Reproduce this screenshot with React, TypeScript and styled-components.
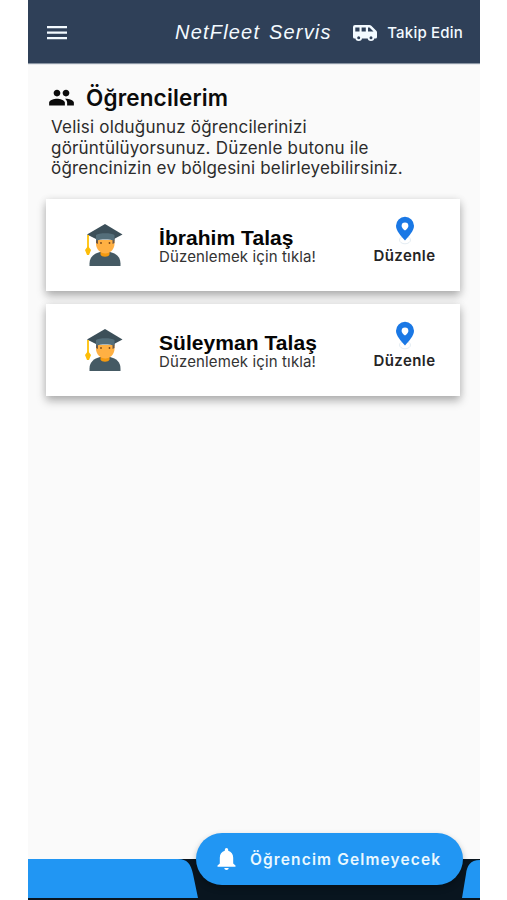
import React from "react";
import styled, { createGlobalStyle } from "styled-components";

const GlobalStyle = createGlobalStyle`
  * { box-sizing: border-box; }
  body { margin: 0; background: #fff; font-family: Inter, "Liberation Sans", sans-serif; }
  svg { display: block; flex: none; }
  button { font-family: inherit; border: 0; background: none; padding: 0; cursor: pointer; }
`;

const Screen = styled.div`
  position: relative;
  display: flex;
  flex-direction: column;
  width: 452px;
  height: 900px;
  margin-left: 28px;
  background: #fafafa;
  overflow: hidden;
`;

const AppBar = styled.header`
  display: flex;
  align-items: center;
  flex: none;
  height: 63px;
  padding: 2px 17px 0 17px;
  color: #f3faff;
  background: #2f4058;
  box-shadow: 0 1px 1px #8a95a3;
`;

const Brand = styled.div`
  width: 160px;
  margin-left: 106px;
  font: italic 300 20px "Liberation Sans", sans-serif;
  letter-spacing: 1.2px;
  word-spacing: 2px;
  white-space: nowrap;
`;

const TrackButton = styled.button`
  display: flex;
  align-items: center;
  gap: 9px;
  margin-left: auto;
  color: inherit;
  font-size: 15px;
  font-weight: 500;
  letter-spacing: 0.2px;
  white-space: nowrap;
`;

const Main = styled.main`
  flex: 1;
  padding: 21px 20px 0 18px;
`;

const Heading = styled.h1`
  display: flex;
  align-items: center;
  gap: 11px;
  height: 27px;
  margin: 0;
  padding-left: 2px;
  color: #0b0b0b;
  font-size: 22.5px;
  font-weight: 600;
  letter-spacing: 0.15px;
`;

const Intro = styled.p`
  margin: 6px 0 20px;
  padding-left: 5px;
  color: #2c2c2c;
  font-size: 17px;
  line-height: 20.7px;
  letter-spacing: 0.2px;
  white-space: nowrap;
`;

const Cards = styled.div`
  display: grid;
  gap: 13px;
`;

const Card = styled.article`
  display: grid;
  grid-template-columns: 113px 1fr 111px;
  height: 92px;
  background: #fff;
  box-shadow: 0 5px 9px rgba(0, 0, 0, 0.27), 0 1px 8px rgba(0, 0, 0, 0.1);
`;

const Avatar = styled.div`
  padding: 24px 0 0 39px;
`;

const Student = styled.div`
  padding-top: 26px;
  white-space: nowrap;
`;

const Name = styled.h2`
  margin: 0;
  color: #050505;
  font: bold 21px/25px "Liberation Sans", sans-serif;
  letter-spacing: 0.05px;
`;

const Hint = styled.p`
  margin: 0;
  color: #333;
  font-size: 15px;
  line-height: 14px;
  letter-spacing: 0.13px;
`;

const EditButton = styled.button`
  display: flex;
  flex-direction: column;
  align-items: center;
  padding-top: 17px;
  color: #252525;
  font-size: 15px;
  line-height: 20px;
  font-weight: 600;
  letter-spacing: 0.4px;
`;

const BottomBar = styled.footer`
  display: flex;
  flex: none;
  justify-content: space-between;
  height: 41px;
  background: #09151f;
`;

const Fab = styled.button`
  position: absolute;
  right: 17px;
  bottom: 15px;
  display: flex;
  align-items: center;
  gap: 14px;
  width: 267px;
  height: 52px;
  padding-left: 21px;
  border-radius: 26px;
  color: #e9f8ff;
  background: #2196f3;
  box-shadow: 0 3px 6px rgba(0, 0, 0, 0.28);
  font-size: 15.5px;
  font-weight: 600;
  letter-spacing: 1.13px;
  white-space: nowrap;
`;

const MenuIcon = () => (
  <svg width="24" height="24" viewBox="0 0 24 24" fill="currentColor">
    <path d="M2 5h20v2.2H2zm0 5.6h20v2.2H2zm0 5.5h20v2.2H2z" />
  </svg>
);

const VanIcon = () => (
  <svg width="26" height="18" viewBox="0 0 26 18">
    <path d="M3 1h14.500q1 0 1.800.8l5 5q.7.700.700 1.700V13q0 1.500-1.500 1.500H2.500Q1 14.500 1 13V3q0-2 2-2z" fill="currentColor" />
    <path d="M3.300 3.500h4.200v4H3.300zM9.600 3.500h4.200v4H9.600zM16 3.500h1.500l4 4H16z" fill="#2f4058" />
    <circle cx="6.700" cy="13.800" r="2.400" fill="#2f4058" stroke="currentColor" strokeWidth="1.800" />
    <circle cx="19" cy="13.800" r="2.400" fill="#2f4058" stroke="currentColor" strokeWidth="1.800" />
  </svg>
);

const PeopleIcon = () => (
  <svg width="27" height="27" viewBox="0 0 24 24" fill="currentColor">
    <path d="M16 11c1.660 0 2.990-1.340 2.990-3S17.660 5 16 5s-3 1.340-3 3 1.340 3 3 3zm-8 0c1.660 0 2.990-1.340 2.990-3S9.660 5 8 5 5 6.340 5 8s1.340 3 3 3zm0 2c-2.330 0-7 1.170-7 3.500V19h14v-2.500c0-2.330-4.670-3.500-7-3.500zm8 0c-.29 0-.62.020-.97.050 1.160.84 1.970 1.970 1.970 3.450V19h6v-2.500c0-2.330-4.670-3.500-7-3.500z" />
  </svg>
);

const GraduateIcon = () => (
  <svg width="38" height="44" viewBox="0 0 38 44">
    <path d="M4.500 43v-2.500C4.500 34 9 30.500 15 29h10c6.500 1.500 10.500 5 10.500 11.500V43z" fill="#455a64" />
    <path d="M15.500 27h9v4.500c-1 3-8 3-9 0z" fill="#f59a10" />
    <path d="M11 17h18.500v4c0 5-4.300 9.500-9.200 9.500S11 26 11 21z" fill="#ffb043" />
    <path d="M11 15h2v6l-2-1zM27.500 15h2v5l-2 1z" fill="#6d5848" />
    <path d="M20 1L37.500 11.500 29 16H11L2 11.500z" fill="#3c4f59" />
    <path d="M11 12c3-2.500 15.500-2.500 18.500 0v5.500c-4-1.500-14.500-1.500-18.500 0z" fill="#546e7a" />
    <circle cx="16" cy="20" r="0.900" fill="#784719" />
    <circle cx="24.500" cy="20" r="0.900" fill="#784719" />
    <path d="M3 12v14" stroke="#ffc107" strokeWidth="1.8" />
    <path d="M3 23l3 4-2 5H2l-2-5z" fill="#fdbd08" />
  </svg>
);

const PinIcon = () => (
  <svg width="20" height="30" viewBox="0 0 20 30">
    <ellipse cx="10" cy="24" rx="5.500" ry="3.800" fill="#fff" stroke="#dde7ef" strokeWidth="0.8" />
    <path
      fillRule="evenodd"
      fill="#1a78e5"
      d="M10 0.800a9 9 0 0 0-9 9C1 15 6 20 10 24.500 14 20 19 15 19 9.800a9 9 0 0 0-9-9zm0 5.700a3.400 3.400 0 0 1 3.400 3.400c0 1.300-1.400 3-3.400 4.600-2-1.600-3.400-3.300-3.400-4.600A3.400 3.400 0 0 1 10 6.500z"
    />
  </svg>
);

const BellIcon = () => (
  <svg width="19" height="22" viewBox="0 0 19 22" fill="#fff">
    <path d="M9.500 22a2.400 2.400 0 0 0 2.300-2H7.200a2.400 2.400 0 0 0 2.300 2zM16.200 15.500V9.700c0-3.500-1.900-6.200-5-7V1.800a1.700 1.700 0 0 0-3.400 0v.9c-3.200.8-5 3.500-5 7v5.800L.5 17.500v1.200h18v-1.200z" />
  </svg>
);

const LeftTab = () => (
  <svg width="170" height="39" viewBox="0 0 170 39">
    <path d="M0 0h150c9 0 13 5 15 15l5 24H0z" fill="#2196f3" />
  </svg>
);

const RightTab = () => (
  <svg width="18" height="39" viewBox="0 0 18 39">
    <path d="M0 39L4 15C5 7 8 1 18 1v38z" fill="#2196f3" />
  </svg>
);

const students = ["İbrahim Talaş", "Süleyman Talaş"];

export default function App() {
  return (
    <>
      <GlobalStyle />
      <Screen>
        <AppBar>
          <MenuIcon />
          <Brand>NetFleet Servis</Brand>
          <TrackButton>
            <VanIcon />
            Takip Edin
          </TrackButton>
        </AppBar>
        <Main>
          <Heading>
            <PeopleIcon />
            Öğrencilerim
          </Heading>
          <Intro>
            Velisi olduğunuz öğrencilerinizi
            <br />
            görüntülüyorsunuz. Düzenle butonu ile
            <br />
            öğrencinizin ev bölgesini belirleyebilirsiniz.
          </Intro>
          <Cards>
            {students.map((name) => (
              <Card key={name}>
                <Avatar>
                  <GraduateIcon />
                </Avatar>
                <Student>
                  <Name>{name}</Name>
                  <Hint>Düzenlemek için tıkla!</Hint>
                </Student>
                <EditButton>
                  <PinIcon />
                  Düzenle
                </EditButton>
              </Card>
            ))}
          </Cards>
        </Main>
        <BottomBar>
          <LeftTab />
          <RightTab />
        </BottomBar>
        <Fab>
          <BellIcon />
          Öğrencim Gelmeyecek
        </Fab>
      </Screen>
    </>
  );
}
